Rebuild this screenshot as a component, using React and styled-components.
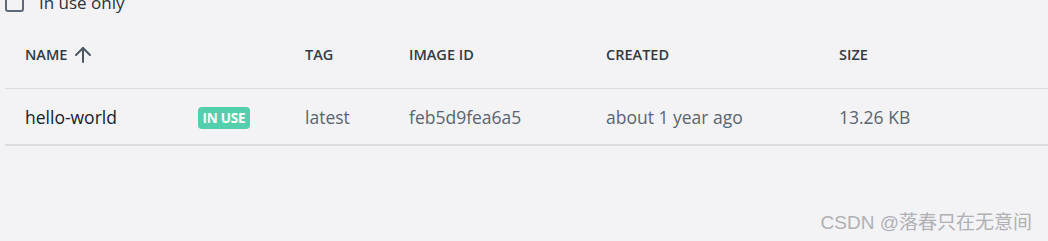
import React from 'react'
import styled, { createGlobalStyle } from 'styled-components'
import { ArrowUp } from 'lucide-react'

const GlobalStyle = createGlobalStyle`
    html, body {
        margin: 0;
        padding: 0;
        background: #f3f3f6;
        overflow: hidden;
    }
    body {
        font-family: 'Open Sans', 'Noto Sans', sans-serif;
    }
`;

const images = [
    {
        id: 1,
        name: 'hello-world',
        inUse: true,
        tag: 'latest',
        imageId: 'feb5d9fea6a5',
        created: 'about 1 year ago',
        size: '13.26 KB'
    }
];

export default function App() {
  return (
    <Page>
        <GlobalStyle />
        <FilterBar>
            <CheckBox />
            <FilterLabel>In use only</FilterLabel>
        </FilterBar>
        <Table>
            <HeaderRow>
                <HeadCell>
                    NAME
                    <SortIcon size={24} strokeWidth={2} />
                </HeadCell>
                <HeadCell />
                <HeadCell>TAG</HeadCell>
                <HeadCell>IMAGE ID</HeadCell>
                <HeadCell>CREATED</HeadCell>
                <HeadCell>SIZE</HeadCell>
            </HeaderRow>
            {images.map((image) => (
                <BodyRow key={image.id}>
                    <NameCell>{image.name}</NameCell>
                    <Cell>{image.inUse && <Badge>IN USE</Badge>}</Cell>
                    <Cell>{image.tag}</Cell>
                    <Cell>{image.imageId}</Cell>
                    <Cell>{image.created}</Cell>
                    <Cell>{image.size}</Cell>
                </BodyRow>
            ))}
        </Table>
        <Watermark>CSDN @落春只在无意间</Watermark>
    </Page>
  )
}

const Page = styled.div`
    display: flex;
    flex-direction: column;
    width: 1048px;
    height: 241px;
    overflow: hidden;
`;

const FilterBar = styled.div`
    display: flex;
    align-items: center;
    gap: 15px;
    height: 19px;
    margin-top: -7px;
    margin-bottom: 8px;
    padding-left: 5px;
`;

const CheckBox = styled.div`
    flex: none;
    width: 15px;
    height: 15px;
    border: 2px solid #5e6977;
    border-radius: 3px;
`;

const FilterLabel = styled.span`
    font-size: 17px;
    line-height: 19px;
    color: #2b323b;
`;

const Table = styled.div`
    display: flex;
    flex-direction: column;
    margin-left: 5px;
`;

const columns = '193px 107px 104px 197px 233px 1fr';

const HeaderRow = styled.div`
    display: grid;
    grid-template-columns: ${columns};
    align-items: center;
    height: 68px;
    border-bottom: 1px solid #dcdce0;
`;

const HeadCell = styled.div`
    display: flex;
    align-items: center;
    gap: 4px;
    font-size: 14.5px;
    font-weight: 600;
    color: #323a44;
    &:first-child {
        padding-left: 20px;
    }
`;

const SortIcon = styled(ArrowUp)`
    flex: none;
    color: #4d5663;
    margin-top: 1px;
`;

const BodyRow = styled.div`
    display: grid;
    grid-template-columns: ${columns};
    align-items: center;
    height: 55px;
    border-bottom: 2px solid #dcdce0;
`;

const Cell = styled.div`
    font-size: 17.5px;
    color: #5a6471;
`;

const NameCell = styled(Cell)`
    padding-left: 20px;
    color: #17202c;
    font-weight: 500;
`;

const Badge = styled.span`
    display: inline-flex;
    align-items: center;
    justify-content: center;
    width: 52px;
    height: 22px;
    border-radius: 4px;
    background: #54cfae;
    color: #ffffff;
    font-size: 13.5px;
    font-weight: 700;
    letter-spacing: -0.2px;
`;

const Watermark = styled.div`
    align-self: flex-end;
    margin-top: auto;
    margin-bottom: 7px;
    margin-right: 16px;
    font-family: 'Liberation Sans', 'Noto Sans CJK SC', sans-serif;
    font-size: 19px;
    color: #b0b0b3;
`;
